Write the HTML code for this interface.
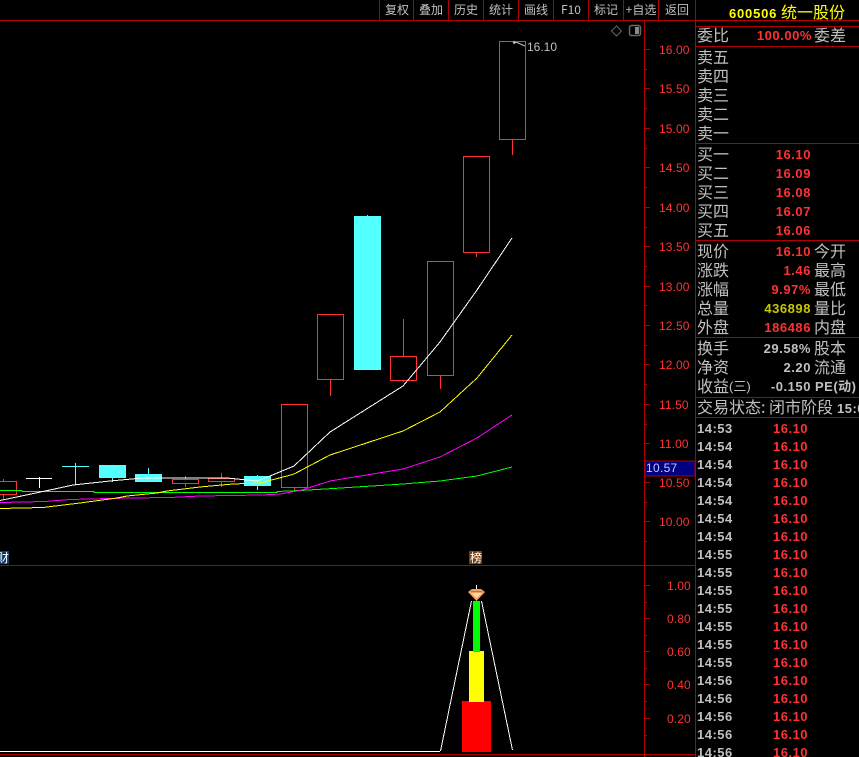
<!DOCTYPE html>
<html><head><meta charset="utf-8"><style>
html,body{margin:0;padding:0;background:#000;overflow:hidden}
svg{display:block;position:absolute;left:0;top:0}
text{font-family:"Liberation Sans","WenQuanYi Zen Hei","Noto Sans CJK SC",sans-serif}
.cn{font-size:16px;fill:#c0c0c0;font-family:"WenQuanYi Zen Hei","Noto Sans CJK SC",sans-serif}
.tb{font-size:12px;fill:#c0c0c0;text-anchor:middle;font-family:"WenQuanYi Zen Hei","Noto Sans CJK SC",sans-serif}
.ax{font-size:12px;fill:#ff3232;letter-spacing:.1px}
.v{font-size:13px;font-weight:bold;fill:#ff3232;text-anchor:end;letter-spacing:.55px}
.t{font-size:13px;font-weight:bold;fill:#c0c0c0;letter-spacing:.5px}
.p{font-size:13px;font-weight:bold;fill:#ff3232;letter-spacing:.5px}
.r{fill:none;stroke:#ff3232;stroke-width:1}
.l{stroke:#b00000;stroke-width:1;fill:none}
</style></head><body>
<svg width="859" height="757" viewBox="0 0 859 757" xmlns="http://www.w3.org/2000/svg">
<rect width="859" height="757" fill="#000"/>
<g shape-rendering="crispEdges">
<path class="l" d="M0 20.5H859M0 565.5H695M0 754.5H695M644.5 20V757M695.5 0V757M379.5 0V20M413.5 0V20M448.5 0V20M483.5 0V20M518.5 0V20M553.5 0V20M588.5 0V20M623.5 0V20M658.5 0V20"/>
<path class="l" d="M695 26.5H859M695 46.5H859M695 143.5H859M695 240.5H859M695 337.5H859M695 397.5H859M695 417.5H859"/>
<path class="l" d="M644 49.5H650M644 69.5H647M644 88.5H650M644 108.5H647M644 128.5H650M644 148.5H647M644 167.5H650M644 187.5H647M644 207.5H650M644 227.5H647M644 246.5H650M644 266.5H647M644 286.5H650M644 305.5H647M644 325.5H650M644 345.5H647M644 364.5H650M644 384.5H647M644 404.5H650M644 424.5H647M644 443.5H650M644 482.5H650M644 502.5H647M644 521.5H650M644 541.5H647M644 585.5H650M644 602.5H647M644 618.5H650M644 635.5H647M644 651.5H650M644 668.5H647M644 684.5H650M644 701.5H647M644 718.5H650M644 735.5H647"/>
<rect x="645" y="461" width="50" height="15" fill="#000080" stroke="#b00000"/>
<rect x="469" y="551" width="13" height="13" fill="#7a4010"/>
<rect x="0" y="551" width="9" height="13" fill="#0a3a6a"/>

<path class="r" d="M3.5 479V481M3.5 494V499M-2 481.5H16.5V494.5H-2M294.5 487V490M330.5 379V396M403.5 319V356M403.5 381V382M440.5 375V389M476.5 252V257M512.5 139V155M185.5 476V479M185.5 483V487M221.5 473V478M221.5 481V487"/>
<rect class="r" x="281.5" y="404.5" width="26" height="83"/>
<rect class="r" x="317.5" y="314.5" width="26" height="65"/>
<rect class="r" x="390.5" y="356.5" width="26" height="24"/>
<rect class="r" x="427.5" y="261.5" width="26" height="114"/>
<rect class="r" x="463.5" y="156.5" width="26" height="96"/>
<rect class="r" x="499.5" y="41.5" width="26" height="98"/>
<rect class="r" x="172.5" y="479.5" width="26" height="4"/>
<rect class="r" x="208.5" y="478.5" width="26" height="3"/>
<path d="M26 478.5H52M39.5 477V488" stroke="#fff" fill="none"/>
<path d="M62 466.5H89M75.5 463V485M112.5 478V482M148.5 468V474M257.5 475V490M367.5 215V216" stroke="#54ffff" fill="none"/>
<rect x="99" y="465" width="27" height="13" fill="#54ffff"/>
<rect x="135" y="474" width="27" height="8" fill="#54ffff"/>
<rect x="244" y="476" width="27" height="10" fill="#54ffff"/>
<rect x="354" y="216" width="27" height="154" fill="#54ffff"/>

<polyline fill="none" stroke="#00ff00" points="0,490.5 22,490.5 22,491.5 94,491.5 94,492.5 277,492.5 277,491.5 300,490.5 330,488.7 403,484 440,481 477,476 512,467"/>
<polyline fill="none" stroke="#ff00ff" points="0,502.5 45,501.5 70,499.5 130,498 170,497.5 200,496 262,495 280,494 300,490.5 330,481 403,469 440,457 477,438 512,415"/>
<polyline fill="none" stroke="#ffff00" points="0,508.5 43,507.5 80,503 117,498 127,496 157,493 167,491 200,487 233,484 260,483 287,476 294,474 330,455 403,431 440,412 477,378 512,335"/>
<polyline fill="none" stroke="#ffffff" points="0,500.5 50,490 73,485 110,481 143,478 227,478 257,481 270,476 294,466 330,432 403,386 440,342 477,290 512,238"/>

<rect x="462" y="701" width="29" height="51" fill="#ff0000"/>
<rect x="469" y="651" width="15" height="51" fill="#ffff00"/>
<rect x="473" y="601" width="7" height="51" fill="#00ff00"/>
<path d="M0 751.5H440" stroke="#fff"/>
<path d="M476.5 585V589" stroke="#fff"/>
<path d="M440.5 751L471.5 601M481.5 601L512.5 750" stroke="#fff" fill="none"/>
</g>
<path d="M468 592L472 589H481L485 592L476.5 601Z" fill="#f0a060"/>
<path d="M471 593H482L476.5 598Z" fill="#ffd8a8"/>
<path d="M471 591.5H482" stroke="#d07020"/>

<path d="M616.5 26L621.5 31L616.5 36L611.5 31Z" fill="none" stroke="#666"/>
<rect x="629.5" y="25.5" width="11" height="10" rx="2" fill="none" stroke="#666" stroke-width="1.5"/>
<rect x="635" y="27" width="4" height="7" fill="#888"/>
<path d="M513 42.5L515 41M513 42.5L515 44M513 42.5H517L525 46" fill="none" stroke="#c0c0c0"/>
<text x="527" y="51" font-size="12" fill="#c0c0c0">16.10</text>

<text class="tb" x="397" y="14">复权</text><text class="tb" x="431" y="14">叠加</text><text class="tb" x="466" y="14">历史</text><text class="tb" x="501" y="14">统计</text><text class="tb" x="536" y="14">画线</text><text class="tb" x="571" y="14">F10</text><text class="tb" x="606" y="14">标记</text><text class="tb" x="641" y="14">+自选</text><text class="tb" x="677" y="14">返回</text>

<text x="729" y="18" font-size="13" font-weight="bold" fill="#ffff00" letter-spacing=".8">600506</text>
<text class="cn" x="781" y="18" style="fill:#ffff00">统一股份</text>

<text class="ax" x="659" y="54">16.00</text><text class="ax" x="659" y="93">15.50</text><text class="ax" x="659" y="133">15.00</text><text class="ax" x="659" y="172">14.50</text><text class="ax" x="659" y="212">14.00</text><text class="ax" x="659" y="251">13.50</text><text class="ax" x="659" y="291">13.00</text><text class="ax" x="659" y="330">12.50</text><text class="ax" x="659" y="369">12.00</text><text class="ax" x="659" y="409">11.50</text><text class="ax" x="659" y="448">11.00</text><text class="ax" x="659" y="487">10.50</text><text class="ax" x="659" y="526">10.00</text>
<text class="ax" x="667" y="590">1.00</text><text class="ax" x="667" y="623">0.80</text><text class="ax" x="667" y="656">0.60</text><text class="ax" x="667" y="689">0.40</text><text class="ax" x="667" y="723">0.20</text>
<text x="646" y="472" font-size="12" fill="#c8c8ff" letter-spacing=".3">10.57</text>
<text x="-3" y="562" font-size="12" fill="#fff" font-family="WenQuanYi Zen Hei,Noto Sans CJK SC,sans-serif">财</text>
<text x="470" y="562" font-size="12" fill="#fff" font-family="WenQuanYi Zen Hei,Noto Sans CJK SC,sans-serif">榜</text>

<text class="cn" x="697" y="41">委比</text><text class="v" x="812" y="40">100.00%</text><text class="cn" x="814" y="41">委差</text>
<text class="cn" x="697" y="63">卖五</text><text class="cn" x="697" y="82">卖四</text><text class="cn" x="697" y="101">卖三</text><text class="cn" x="697" y="120">卖二</text><text class="cn" x="697" y="139">卖一</text>
<text class="cn" x="697" y="160">买一</text><text class="v" x="811" y="159">16.10</text>
<text class="cn" x="697" y="179">买二</text><text class="v" x="811" y="178">16.09</text>
<text class="cn" x="697" y="198">买三</text><text class="v" x="811" y="197">16.08</text>
<text class="cn" x="697" y="217">买四</text><text class="v" x="811" y="216">16.07</text>
<text class="cn" x="697" y="236">买五</text><text class="v" x="811" y="235">16.06</text>
<text class="cn" x="697" y="257">现价</text><text class="v" x="811" y="256">16.10</text><text class="cn" x="814" y="257">今开</text>
<text class="cn" x="697" y="276">涨跌</text><text class="v" x="811" y="275">1.46</text><text class="cn" x="814" y="276">最高</text>
<text class="cn" x="697" y="295">涨幅</text><text class="v" x="811" y="294">9.97%</text><text class="cn" x="814" y="295">最低</text>
<text class="cn" x="697" y="314">总量</text><text class="v" x="811" y="313" style="fill:#c8c800">436898</text><text class="cn" x="814" y="314">量比</text>
<text class="cn" x="697" y="333">外盘</text><text class="v" x="811" y="332">186486</text><text class="cn" x="814" y="333">内盘</text>
<text class="cn" x="697" y="354">换手</text><text class="v" x="811" y="353" style="fill:#c0c0c0">29.58%</text><text class="cn" x="814" y="354">股本</text>
<text class="cn" x="697" y="373">净资</text><text class="v" x="811" y="372" style="fill:#c0c0c0">2.20</text><text class="cn" x="814" y="373">流通</text>
<text class="cn" x="697" y="392">收益</text><text x="729" y="391" font-size="13" fill="#c0c0c0" font-family="WenQuanYi Zen Hei,Noto Sans CJK SC,sans-serif">(三)</text><text class="v" x="811" y="391" style="fill:#c0c0c0">-0.150</text><text x="815" y="391" font-size="13" font-weight="bold" fill="#c0c0c0" letter-spacing=".5">PE(动)</text>
<text class="cn" x="697" y="413">交易状态:</text><text class="cn" x="769" y="413">闭市阶段</text><text class="t" x="837" y="413">15:00</text>

<text class="t" x="697" y="433">14:53</text><text class="p" x="773" y="433">16.10</text>
<text class="t" x="697" y="451">14:54</text><text class="p" x="773" y="451">16.10</text>
<text class="t" x="697" y="469">14:54</text><text class="p" x="773" y="469">16.10</text>
<text class="t" x="697" y="487">14:54</text><text class="p" x="773" y="487">16.10</text>
<text class="t" x="697" y="505">14:54</text><text class="p" x="773" y="505">16.10</text>
<text class="t" x="697" y="523">14:54</text><text class="p" x="773" y="523">16.10</text>
<text class="t" x="697" y="541">14:54</text><text class="p" x="773" y="541">16.10</text>
<text class="t" x="697" y="559">14:55</text><text class="p" x="773" y="559">16.10</text>
<text class="t" x="697" y="577">14:55</text><text class="p" x="773" y="577">16.10</text>
<text class="t" x="697" y="595">14:55</text><text class="p" x="773" y="595">16.10</text>
<text class="t" x="697" y="613">14:55</text><text class="p" x="773" y="613">16.10</text>
<text class="t" x="697" y="631">14:55</text><text class="p" x="773" y="631">16.10</text>
<text class="t" x="697" y="649">14:55</text><text class="p" x="773" y="649">16.10</text>
<text class="t" x="697" y="667">14:55</text><text class="p" x="773" y="667">16.10</text>
<text class="t" x="697" y="685">14:56</text><text class="p" x="773" y="685">16.10</text>
<text class="t" x="697" y="703">14:56</text><text class="p" x="773" y="703">16.10</text>
<text class="t" x="697" y="721">14:56</text><text class="p" x="773" y="721">16.10</text>
<text class="t" x="697" y="739">14:56</text><text class="p" x="773" y="739">16.10</text>
<text class="t" x="697" y="757">14:56</text><text class="p" x="773" y="757">16.10</text>
</svg>
</body></html>
